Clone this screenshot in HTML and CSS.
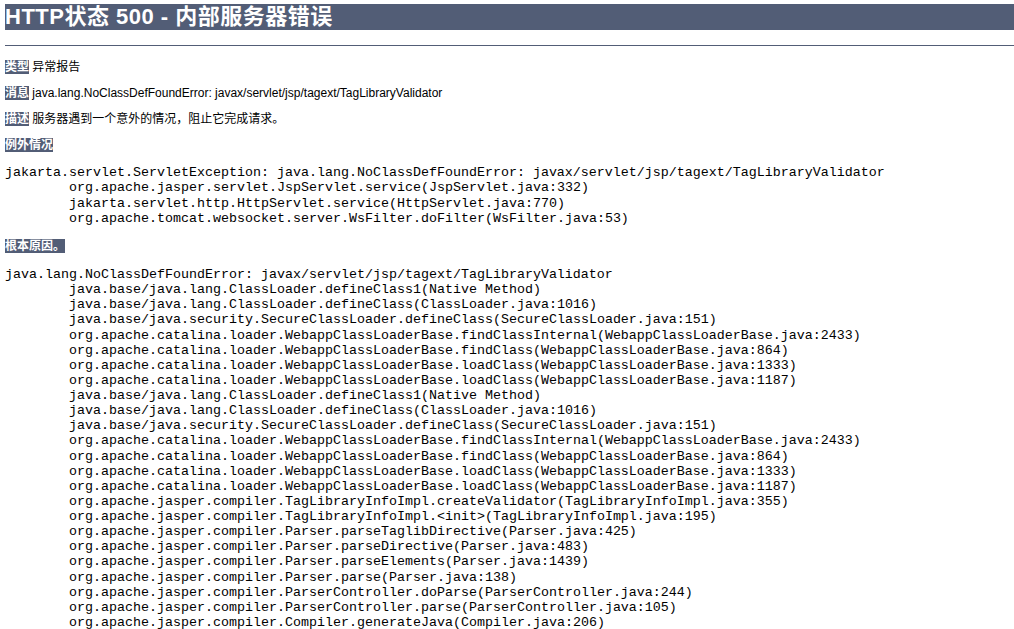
FILE: index.html
```html
<!doctype html>
<html lang="zh">
<head>
<meta charset="utf-8">
<title>HTTP状态 500 - 内部服务器错误</title>
<link rel="stylesheet" href="styles.css">
</head>
<body>
<h1>HTTP状态 500 - 内部服务器错误</h1>
<hr class="line" />
<p><b>类型</b> 异常报告</p>
<p><b>消息</b> java.lang.NoClassDefFoundError: javax/servlet/jsp/tagext/TagLibraryValidator</p>
<p><b>描述</b> 服务器遇到一个意外的情况，阻止它完成请求。</p>
<p><b>例外情况</b></p>
<pre>jakarta.servlet.ServletException: java.lang.NoClassDefFoundError: javax/servlet/jsp/tagext/TagLibraryValidator
	org.apache.jasper.servlet.JspServlet.service(JspServlet.java:332)
	jakarta.servlet.http.HttpServlet.service(HttpServlet.java:770)
	org.apache.tomcat.websocket.server.WsFilter.doFilter(WsFilter.java:53)
</pre>
<p><b>根本原因。</b></p>
<pre>java.lang.NoClassDefFoundError: javax/servlet/jsp/tagext/TagLibraryValidator
	java.base/java.lang.ClassLoader.defineClass1(Native Method)
	java.base/java.lang.ClassLoader.defineClass(ClassLoader.java:1016)
	java.base/java.security.SecureClassLoader.defineClass(SecureClassLoader.java:151)
	org.apache.catalina.loader.WebappClassLoaderBase.findClassInternal(WebappClassLoaderBase.java:2433)
	org.apache.catalina.loader.WebappClassLoaderBase.findClass(WebappClassLoaderBase.java:864)
	org.apache.catalina.loader.WebappClassLoaderBase.loadClass(WebappClassLoaderBase.java:1333)
	org.apache.catalina.loader.WebappClassLoaderBase.loadClass(WebappClassLoaderBase.java:1187)
	java.base/java.lang.ClassLoader.defineClass1(Native Method)
	java.base/java.lang.ClassLoader.defineClass(ClassLoader.java:1016)
	java.base/java.security.SecureClassLoader.defineClass(SecureClassLoader.java:151)
	org.apache.catalina.loader.WebappClassLoaderBase.findClassInternal(WebappClassLoaderBase.java:2433)
	org.apache.catalina.loader.WebappClassLoaderBase.findClass(WebappClassLoaderBase.java:864)
	org.apache.catalina.loader.WebappClassLoaderBase.loadClass(WebappClassLoaderBase.java:1333)
	org.apache.catalina.loader.WebappClassLoaderBase.loadClass(WebappClassLoaderBase.java:1187)
	org.apache.jasper.compiler.TagLibraryInfoImpl.createValidator(TagLibraryInfoImpl.java:355)
	org.apache.jasper.compiler.TagLibraryInfoImpl.&lt;init&gt;(TagLibraryInfoImpl.java:195)
	org.apache.jasper.compiler.Parser.parseTaglibDirective(Parser.java:425)
	org.apache.jasper.compiler.Parser.parseDirective(Parser.java:483)
	org.apache.jasper.compiler.Parser.parseElements(Parser.java:1439)
	org.apache.jasper.compiler.Parser.parse(Parser.java:138)
	org.apache.jasper.compiler.ParserController.doParse(ParserController.java:244)
	org.apache.jasper.compiler.ParserController.parse(ParserController.java:105)
	org.apache.jasper.compiler.Compiler.generateJava(Compiler.java:206)
</pre>
</body>
</html>
```

FILE: styles.css
```css
html{ overflow:hidden;}
body{ margin:0 0 0 5px; font-family:Tahoma,"Liberation Sans","Noto Sans CJK SC",sans-serif; color:black; background-color:white;}
h1{ margin:4px 0 14.74px; font-family:Tahoma,"Liberation Sans","Noto Sans CJK SC",sans-serif; color:white; background-color:#525D76; font-size:22px; line-height:26px; letter-spacing:0.5px;}
b{ font-family:Tahoma,"Liberation Sans","Noto Sans CJK SC",sans-serif; color:white; background-color:#525D76;}
p{ margin:12px 0; font-family:Tahoma,"Liberation Sans","Noto Sans CJK SC",sans-serif; background:white; color:black; font-size:12px; line-height:14px;}
.line{ height:1px; background-color:#525D76; border:none; margin:0 0 14px 0;}
pre{ margin:13.6px 0; font-family:"Liberation Mono","Noto Sans CJK SC",monospace; font-size:13.33px; line-height:15.13px; tab-size:8;}
```
